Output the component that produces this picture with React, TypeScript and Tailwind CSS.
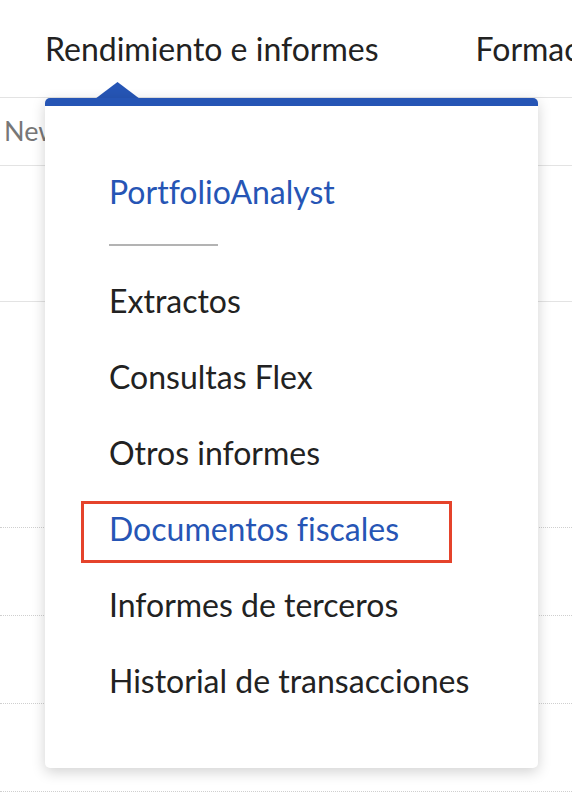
import React from "react";

const menuItems = [
  "Extractos",
  "Consultas Flex",
  "Otros informes",
  "Documentos fiscales",
  "Informes de terceros",
  "Historial de transacciones",
];

const App = () => {
  return (
    <div
      className="relative w-[572px] h-[794px] overflow-hidden bg-white text-[#222] [font-variant-ligatures:none]"
      style={{ fontFamily: "Lato, 'Open Sans', sans-serif" }}
    >
      {/* top nav */}
      <div className="h-[98px] border-b border-[#e3e3e3] flex items-center pl-[45px] gap-[97px] whitespace-nowrap">
        <span className="text-[32px] leading-none">Rendimiento e informes</span>
        <span className="text-[32px] leading-none">Formación</span>
      </div>

      {/* page content behind menu */}
      <div className="h-[68px] border-b border-[#e3e3e3] flex items-center pl-[4px]">
        <span className="text-[27px] text-[#777]">New</span>
      </div>
      <div className="h-[136px] border-b border-[#e3e3e3]"></div>
      <div className="h-[226px] border-b border-dotted border-[#cfcfcf]"></div>
      <div className="h-[88px] border-b border-dotted border-[#cfcfcf]"></div>
      <div className="h-[88px] border-b border-dotted border-[#cfcfcf]"></div>
      <div className="h-[88px] border-b border-dotted border-[#cfcfcf]"></div>

      {/* caret */}
      <svg className="absolute left-[95px] top-[82px]" width="45" height="17" viewBox="0 0 45 17">
        <polygon points="22.5,0 45,17 0,17" fill="#2655b5" />
      </svg>

      {/* dropdown */}
      <div className="absolute left-[45px] top-[98px] w-[493px] h-[670px] bg-white border-t-[8px] border-[#2655b5] rounded-[5px] shadow-[0_4px_14px_rgba(0,0,0,0.18)] pt-[48px] pl-[64px]">
        <div className="h-[76px] flex items-center text-[32px] text-[#2655b5]">PortfolioAnalyst</div>
        <div className="mt-[14px] mb-[17px] w-[109px] h-[2px] bg-[#b3b3b3]"></div>
        {menuItems.map((item) => (
          <div
            key={item}
            className={
              item === "Documentos fiscales"
                ? "relative h-[76px] flex items-center text-[32px] text-[#2655b5]"
                : "relative h-[76px] flex items-center text-[32px] text-[#222]"
            }
          >
            {item}
            {item === "Documentos fiscales" && (
              <div className="absolute left-[-28px] top-[10px] w-[371px] h-[62px] border-[3px] border-[#e5432b]"></div>
            )}
          </div>
        ))}
      </div>
    </div>
  );
};

export default App;
